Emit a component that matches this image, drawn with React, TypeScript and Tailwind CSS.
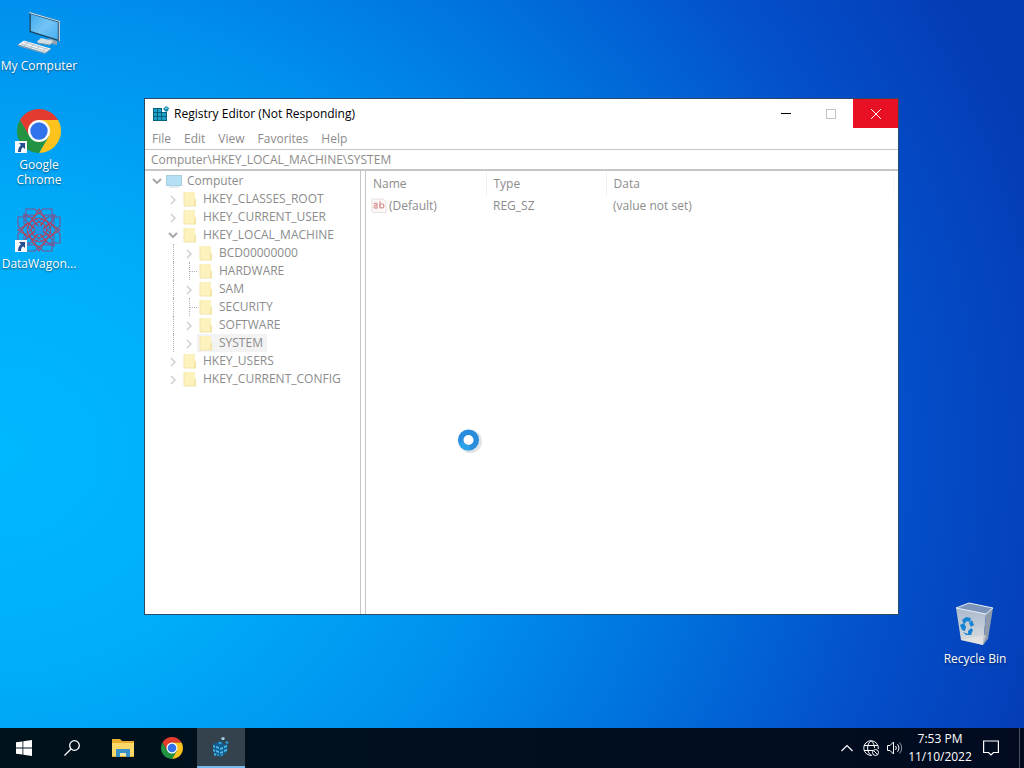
import { useState } from "react";
import type { ReactNode } from "react";

type TreeItem = {
  name: string;
  level: number;
  state: "open" | "closed" | "leaf";
  selected?: boolean;
};

const treeItems: TreeItem[] = [
  { name: "Computer", level: 0, state: "open" },
  { name: "HKEY_CLASSES_ROOT", level: 1, state: "closed" },
  { name: "HKEY_CURRENT_USER", level: 1, state: "closed" },
  { name: "HKEY_LOCAL_MACHINE", level: 1, state: "open" },
  { name: "BCD00000000", level: 2, state: "closed" },
  { name: "HARDWARE", level: 2, state: "leaf" },
  { name: "SAM", level: 2, state: "closed" },
  { name: "SECURITY", level: 2, state: "leaf" },
  { name: "SOFTWARE", level: 2, state: "closed" },
  { name: "SYSTEM", level: 2, state: "closed", selected: true },
  { name: "HKEY_USERS", level: 1, state: "closed" },
  { name: "HKEY_CURRENT_CONFIG", level: 1, state: "closed" },
];

const ComputerIcon = () => (
  <svg viewBox="0 0 48 48" className="size-12">
    <defs>
      <linearGradient id="screen" x1="0" y1="0" x2="1" y2="1">
        <stop offset="0" stopColor="#3fa9ec" />
        <stop offset="0.5" stopColor="#74c4f6" />
        <stop offset="1" stopColor="#46aef0" />
      </linearGradient>
    </defs>
    <path d="M34 30l8 3v4l-9-2z" fill="#8fa3b3" />
    <path d="M14.500 4l30.500 9v20.500L14.500 24z" fill="#1f465f" />
    <path d="M14.500 4l30.500 9v1L14 5z" fill="#cfe8f6" />
    <path d="M43.700 13l1.300.5v20l-1.300-.5z" fill="#b9cbd6" />
    <path d="M15.800 6l27 8.300v17.200l-27-8.500z" fill="url(#screen)" />
    <path d="M22 33.500l4-3.500 13 3-4 4-12-2z" fill="#d3dde4" />
    <path d="M22 33.500l1 1.500 12 2 4-4" fill="none" stroke="#8298a8" />
    <path d="M3 36.500l6-4 27 8-6 4.500z" fill="#eef2f5" />
    <path d="M3 36.500v1.500l27 8 6-4.500v-1L30 45z" fill="#8c9ca8" />
    <path
      d="M6 36l25 7.500M9 34l24 7.300M9 38l5-4M15 40l5-4.500M21 41.500l5-4M27 43.500l5-4"
      stroke="#aebbc5"
      strokeWidth="0.800"
    />
  </svg>
);

const ChromeIcon = ({ className }: { className: string }) => (
  <svg viewBox="0 0 48 48" className={className}>
    <path d="M4.950 13A22 22 0 0 1 43.050 13H24L14.470 29.500z" fill="#e33b2e" />
    <path d="M43.050 13A22 22 0 0 1 24 46L33.530 29.500L24 13z" fill="#fcc31e" />
    <path d="M24 46A22 22 0 0 1 4.950 13L14.470 29.500H33.530z" fill="#229342" />
    <circle cx="24" cy="24" r="11" fill="#fff" />
    <circle cx="24" cy="24" r="8.700" fill="#3273ec" />
  </svg>
);

const DataWagonIcon = () => (
  <svg viewBox="0 0 48 48" className="size-12">
    <g fill="none" stroke="#7d5590" strokeWidth="1.100">
      {[0, 90, 180, 270].map((angle) => (
        <g key={angle} transform={`rotate(${angle} 24 24)`}>
          <path d="M11 14V3h9l4 4 4-4h9v11" />
          <path d="M15 17l9-14 9 14" stroke="#a84a68" />
          <path d="M8 9h10l6 7 6-7h10l-4 8" />
          <path d="M17 12l7 9 7-9-7-5z" stroke="#b04560" />
          <path d="M14 10l8 10M34 10l-8 10" />
        </g>
      ))}
      <path d="M24 12l8.500 3.500L36 24l-3.500 8.500L24 36l-8.500-3.500L12 24l3.500-8.500z" stroke="#b04560" />
      <path d="M24 16l5.500 2.500L32 24l-2.500 5.500L24 32l-5.500-2.500L16 24l2.500-5.500z" stroke="#b04560" />
    </g>
    <circle cx="24" cy="24" r="4" fill="#1f95e8" />
  </svg>
);

const RecycleBinIcon = () => (
  <svg viewBox="0 0 48 48" className="size-12">
    <defs>
      <linearGradient id="bin" x1="0" y1="0" x2="0" y2="1">
        <stop offset="0" stopColor="#a9b9cd" />
        <stop offset="1" stopColor="#dcdedf" />
      </linearGradient>
    </defs>
    <path d="M5 7l13-5 24 5-6 8z" fill="#7d95b9" />
    <path d="M5 7l30 6-3 31-22-5z" fill="url(#bin)" />
    <path d="M35 13l7-6-5 31-5 6z" fill="#8d9bad" />
    <path d="M10 39l12-3 13-2-3 10z" fill="#e9e6e0" opacity="0.600" />
    <path d="M5 7l13-5 24 5-7 6z" fill="none" stroke="#e8eef5" />
    <g fill="#1583d2">
      <path d="M11 19l4-3 5 1-1 4-3-1-3 3z" />
      <path d="M21 19l2 5-3 2-2-4z" />
      <path d="M9 24l4-2 2 4-1 4-3-1z" />
      <path d="M12 31l5 2v-3l3-3 2 2-2 5-5 0z" />
    </g>
  </svg>
);

const ShortcutArrow = () => (
  <svg viewBox="0 0 12 12" className="absolute bottom-0.5 left-0 size-3">
    <rect width="12" height="12" fill="#f5f7fa" />
    <path d="M4 2h6v6L8 6.200C6.500 7 6 8.500 6 11H3C3 8 4 6 6 4.300z" fill="#254f91" />
  </svg>
);

const RegistryIcon = ({ className }: { className: string }) => (
  <svg viewBox="0 0 16 16" className={className}>
    <path d="M0 2h9v4h5v9H0z" fill="#07607f" />
    <g fill="#1fa0c6">
      <path d="M1 3h3v3H1zM5 3h3v3H5zM1 7h3v3H1zM5 7h3v3H5zM9 7h4v3H9z" />
      <path d="M1 11h3v3H1zM5 11h3v3H5zM9 11h4v3H9z" />
    </g>
    <path d="M13 0l3 2-1 3-2 1-3-3z" fill="#1784a4" />
    <path d="M13 1l2 1.500-2 1-1.500-1z" fill="#75cbe0" />
  </svg>
);

const RegistryTaskIcon = () => (
  <svg viewBox="0 0 20 22" className="h-[22px] w-5">
    <path d="M2 8l5-2 2-1 3 1v2l5 1-1 7-6 5-7-2z" fill="#155f8e" />
    <g fill="#48b6e8">
      <path d="M2 9l2 1v2l-2-1zM5 10l3 1v2l-3-1zM2 13l2 1v2l-2-1zM5 14l3 1v2l-3-1z" />
      <path d="M3 17l2 1v2l-2-1zM6 18l2 1v1l-2-1zM9 12l3-1v2l-3 1zM9 16l3-1v2l-3 1z" />
      <path d="M10 19l2-1v1l-2 1zM13 10l3-1v2l-3 1zM13 14l3-1v2l-3 1z" />
      <path d="M7 7l2-1 2 1-2 1z" />
    </g>
    <path d="M10 2l2-1 2 1-1 2h-2z" fill="#a9cfe3" />
    <path d="M15 5l3 1-1 2-3-1z" fill="#2c94c8" />
  </svg>
);

const Chevron = ({ open }: { open: boolean }) => (
  <svg viewBox="0 0 16 16" className="size-4" fill="none">
    {open ? (
      <path d="M4 6l4 4 4-4" stroke="#a2a2a2" strokeWidth="1.800" />
    ) : (
      <path d="M6 5l4 4-4 4" stroke="#d0d0d0" strokeWidth="1.500" />
    )}
  </svg>
);

const FolderIcon = () => (
  <svg viewBox="0 0 16 16" className="size-4">
    <path d="M2 1h11v14H2z" fill="#fbf2bd" />
    <path d="M12 8h2v7h-2z" fill="#f6e6a5" />
    <path d="M2 1v14h12" fill="none" stroke="#f3e4a8" />
  </svg>
);

const MonitorIcon = () => (
  <svg viewBox="0 0 16 16" className="size-4">
    <path d="M0 2h16v11H0z" fill="#a9cddd" />
    <path d="M1 3h14v9H1z" fill="#b4e0f5" />
    <path d="M3 14h10" stroke="#c5dbe5" />
  </svg>
);

const StringValueIcon = () => (
  <svg viewBox="0 0 16 16" className="size-4 shrink-0">
    <path
      d="M1 1h11l3 3v11l-3-1-3 1-3-1-3 1-2-1z"
      fill="#fffafa"
      stroke="#e2d5d5"
      strokeWidth="0.800"
    />
    <g fill="none" stroke="#dc9c9c" strokeWidth="1.300">
      <path d="M2.500 5.500h3.500V10H4a1.300 1.300 0 0 1 0-2.500h2" />
      <path d="M9 3v7.200" />
      <circle cx="10.800" cy="7.900" r="2" />
    </g>
  </svg>
);

type DesktopIconProps = {
  label: string;
  shortcut?: boolean;
  children: ReactNode;
};

const DesktopIcon = ({ label, shortcut, children }: DesktopIconProps) => (
  <button className="flex h-[99px] w-[78px] flex-col items-center">
    <span className="relative">
      {children}
      {shortcut && <ShortcutArrow />}
    </span>
    <span className="mt-0.5 text-xs/[15px] text-white [text-shadow:0_1px_2px_#00000080]">
      {label}
    </span>
  </button>
);

const TreeRow = ({ item }: { item: TreeItem }) => (
  <li className="flex h-[18px] items-center">
    {item.level > 0 && <span className="w-4" />}
    {item.level > 1 && (
      <span className="flex h-full w-4 justify-center">
        <span className="border-l border-dotted border-[#b0b0b0]" />
      </span>
    )}
    {item.state === "leaf" ? (
      <span className="flex h-full w-4 items-center pl-2">
        <span className="h-full border-l border-dotted border-[#b0b0b0]" />
        <span className="w-2 border-t border-dotted border-[#b0b0b0]" />
      </span>
    ) : (
      <button aria-label={`Toggle ${item.name}`}>
        <Chevron open={item.state === "open"} />
      </button>
    )}
    <span
      className={`flex h-full items-center gap-[5px] pl-px pr-1 ${
        item.selected ? "bg-[#f3f3f3]" : ""
      }`}>
      {item.level === 0 ? <MonitorIcon /> : <FolderIcon />}
      {item.name}
    </span>
  </li>
);

const RegistryWindow = () => {
  const [path, setPath] = useState("Computer\\HKEY_LOCAL_MACHINE\\SYSTEM");

  return (
    <section className="absolute bottom-[113px] left-36 right-[125px] top-[98px] flex flex-col border border-[#2a4a66] bg-white text-xs text-[#8c8c8c]">
      <header className="flex h-[29px] shrink-0 items-center text-black">
        <RegistryIcon className="ml-2 size-4" />
        <h1 className="ml-[5px] flex-1">Registry Editor (Not Responding)</h1>
        <button aria-label="Minimize" className="flex h-full w-[45px] items-center justify-center">
          <span className="h-px w-2.5 bg-black" />
        </button>
        <button aria-label="Maximize" className="flex h-full w-[45px] items-center justify-center">
          <span className="size-2.5 border border-[#c4c4c4]" />
        </button>
        <button aria-label="Close" className="flex h-full w-[45px] items-center justify-center bg-[#e81123]">
          <svg viewBox="0 0 10 10" className="size-2.5" stroke="#fff">
            <path d="M0 0l10 10M10 0L0 10" />
          </svg>
        </button>
      </header>
      <nav className="flex h-[21px] shrink-0 items-center gap-[13px] pl-[7px]">
        {["File", "Edit", "View", "Favorites", "Help"].map((name) => (
          <button key={name}>{name}</button>
        ))}
      </nav>
      <input
        aria-label="Key path"
        value={path}
        onChange={(e) => setPath(e.target.value)}
        className="h-[22px] w-full shrink-0 border-b-2 border-t border-[#c6c6c6] px-1.5 outline-none"
      />
      <div className="flex min-h-0 flex-1 gap-1">
        <ul className="w-[216px] shrink-0 overflow-hidden border-r border-[#c6c6c6] pl-1 pt-px">
          {treeItems.map((item) => (
            <TreeRow key={item.name} item={item} />
          ))}
        </ul>
        <div className="flex-1 border-l border-[#c6c6c6] pr-1 pt-px">
          <table className="w-full table-fixed text-left">
            <thead>
              <tr className="h-6">
                <th className="w-[120px] border-r border-[#f0f0f0] pl-[7px] font-normal">Name</th>
                <th className="w-[120px] border-r border-[#f0f0f0] pl-[7px] font-normal">Type</th>
                <th className="border-r border-[#f7f7f7] pl-[7px] font-normal">Data</th>
              </tr>
            </thead>
            <tbody>
              <tr className="h-5">
                <td className="pl-[5px]">
                  <span className="flex items-center gap-0.5">
                    <StringValueIcon />
                    (Default)
                  </span>
                </td>
                <td className="pl-[7px]">REG_SZ</td>
                <td className="pl-[7px]">(value not set)</td>
              </tr>
            </tbody>
          </table>
        </div>
      </div>
    </section>
  );
};

const BusyCursor = () => (
  <svg viewBox="0 0 28 28" className="absolute left-[455px] top-[427px] size-7">
    <circle cx="15.500" cy="14.500" r="9" fill="none" stroke="#dfe4e8" strokeWidth="5" />
    <circle cx="13.500" cy="13" r="7.800" fill="#fff" stroke="#2a8cdc" strokeWidth="5.500" />
    <path d="M6 15a7.800 7.800 0 0 0 9 5.700" fill="none" stroke="#2ba2ea" strokeWidth="5" />
  </svg>
);

const Taskbar = () => (
  <footer className="flex h-10 shrink-0 items-center bg-linear-to-r from-[#00121c] to-[#020b20] text-white">
    <button aria-label="Start" className="flex h-full w-12 items-center justify-center">
      <svg viewBox="0 0 16 16" className="size-4" fill="#fff">
        <path d="M0 2.300l6.500-.9v6.200H0zM7.300 1.300L16 0v7.600H7.300zM0 8.400h6.500v6.200L0 13.700zM7.300 8.400H16V16l-8.700-1.300z" />
      </svg>
    </button>
    <button aria-label="Search" className="flex h-full w-12 items-center justify-center">
      <svg viewBox="0 0 16 16" className="size-4" fill="none" stroke="#fff" strokeWidth="1.300">
        <circle cx="10.500" cy="5.500" r="4.800" />
        <path d="M7 9l-6.500 6.500" />
      </svg>
    </button>
    <div className="ml-[3px] flex h-full gap-px">
      <button aria-label="File Explorer" className="flex w-12 items-center justify-center">
        <svg viewBox="0 0 22 18" className="h-[18px] w-[22px]">
          <path d="M0 0h8l2 2h12v16H0z" fill="#e9ae2e" />
          <path d="M0 4h22v13H0z" fill="#fbd968" />
          <path d="M4 10h14v8h-4v-4H8v4H4z" fill="#3a91c9" />
          <path d="M8 14h6v3H8z" fill="#f6e7a6" />
        </svg>
      </button>
      <button aria-label="Google Chrome" className="flex w-12 items-center justify-center">
        <ChromeIcon className="size-6" />
      </button>
      <button
        aria-label="Registry Editor"
        className="flex w-12 items-center justify-center border-b-2 border-[#76b9ed] bg-[#33424d]">
        <RegistryTaskIcon />
      </button>
    </div>
    <div className="ml-auto flex h-full items-center">
      <button aria-label="Show hidden icons" className="flex w-6 justify-center">
        <svg viewBox="0 0 12 8" className="h-2 w-3" fill="none" stroke="#fff" strokeWidth="1.200">
          <path d="M.5 7L6 1.500 11.500 7" />
        </svg>
      </button>
      <button aria-label="Network" className="flex w-6 justify-center">
        <svg viewBox="0 0 16 16" className="size-4" fill="none" stroke="#fff">
          <path d="M9 15.300A7.300 7.300 0 1 1 15.300 9" />
          <path d="M8 .7C3.500 4 3.500 12 8 15.300M8 .7c2.500 2 3.500 4.500 3.500 7.300M1 5.500h14M1 10.500h9" />
          <circle cx="12.500" cy="12.500" r="3" fill="#020b20" />
          <path d="M10.500 10.500l4 4" />
        </svg>
      </button>
      <button aria-label="Volume" className="flex w-6 justify-center">
        <svg viewBox="0 0 16 16" className="size-4" fill="none" stroke="#fff">
          <path d="M.5 5.500h2.500L6.500 2v12L3 10.500H.5z" />
          <path d="M8.500 6a3 3 0 0 1 0 4M10.500 4.300a5.500 5.500 0 0 1 0 7.400" />
          <path d="M12.500 2.500a8 8 0 0 1 0 11" stroke="#8a93a0" />
        </svg>
      </button>
      <button className="w-[66px] text-center text-xs/[18px]">
        <span className="block">7:53 PM</span>
        <span className="block">11/10/2022</span>
      </button>
      <button aria-label="Notifications" className="flex w-9 justify-center">
        <svg viewBox="0 0 16 16" className="size-4" fill="none" stroke="#fff" strokeWidth="1.200">
          <path d="M.6 1h14.800v11.500H10.500L8 15l-2.500-2.500H.6z" />
        </svg>
      </button>
      <button aria-label="Show desktop" className="ml-2.5 h-full w-[5px] border-l border-[#4a5260]" />
    </div>
  </footer>
);

export default function App() {
  return (
    <div className="flex h-screen flex-col overflow-hidden font-['Open_Sans','Noto_Sans',sans-serif] text-xs">
      <main className="relative flex-1 bg-[radial-gradient(ellipse_106%_132%_at_0%_62%,#00b8ff_0%,#00aefa_22%,#0092ee_45%,#0070dc_65%,#0450cc_82%,#043cb4_100%)]">
        <div className="flex w-[78px] flex-col pt-2">
          <DesktopIcon label="My Computer">
            <ComputerIcon />
          </DesktopIcon>
          <DesktopIcon label="Google Chrome" shortcut>
            <ChromeIcon className="size-12" />
          </DesktopIcon>
          <DesktopIcon label="DataWagon..." shortcut>
            <DataWagonIcon />
          </DesktopIcon>
        </div>
        <RegistryWindow />
        <div className="absolute bottom-7 right-2.5">
          <DesktopIcon label="Recycle Bin">
            <RecycleBinIcon />
          </DesktopIcon>
        </div>
        <BusyCursor />
      </main>
      <Taskbar />
    </div>
  );
}
